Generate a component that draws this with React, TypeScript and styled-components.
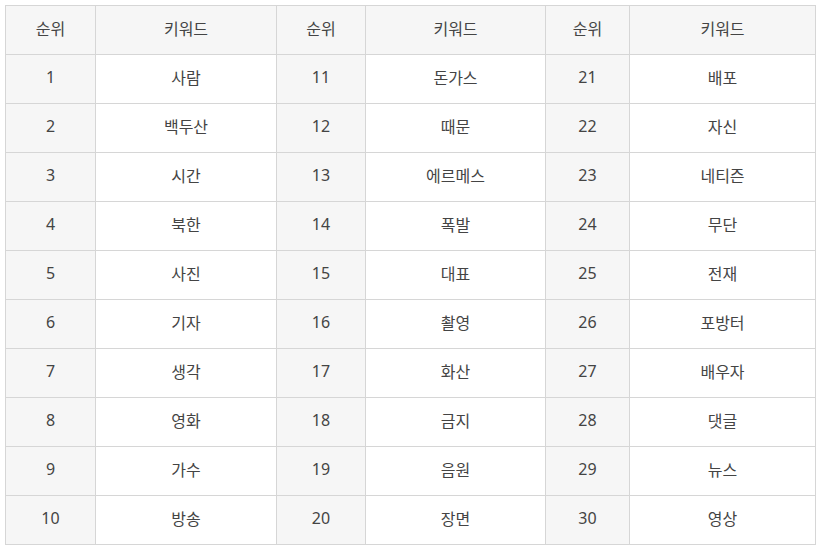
import React from "react";
import styled, { createGlobalStyle } from "styled-components";

const GlobalStyle = createGlobalStyle`
  html, body {
    margin: 0;
    padding: 0;
    background: #ffffff;
  }
`;

const Wrapper = styled.div`
  padding: 5px;
  font-family: "Noto Sans", "Noto Sans CJK KR", sans-serif;
`;

const Table = styled.table`
  width: 810px;
  border-collapse: collapse;
  table-layout: fixed;
  font-size: 16px;
  color: #444;
`;

const Head = styled.th`
  height: 44px;
  padding: 0 0 4px;
  border: 1px solid #d6d6d6;
  background-color: #f6f6f6;
  font-weight: 400;
  text-align: center;
  color: #444;
`;

const Cell = styled.td<{ $rank?: boolean }>`
  height: 44px;
  padding: 0 0 4px;
  border: 1px solid #d6d6d6;
  background-color: ${(p) => (p.$rank ? "#f6f6f6" : "#ffffff")};
  text-align: center;
  color: #444;
`;

const keywords = [
  "사람", "백두산", "시간", "북한", "사진", "기자", "생각", "영화", "가수", "방송",
  "돈가스", "때문", "에르메스", "폭발", "대표", "촬영", "화산", "금지", "음원", "장면",
  "배포", "자신", "네티즌", "무단", "전재", "포방터", "배우자", "댓글", "뉴스", "영상",
];

const widths = [90, 181, 89, 180, 84, 186];

const App: React.FC = () => {
  const rows = Array.from({ length: 10 }, (_, i) => i);
  return (
    <Wrapper>
      <GlobalStyle />
      <Table>
        <colgroup>
          {widths.map((w, i) => (
            <col key={i} style={{ width: w }} />
          ))}
        </colgroup>
        <thead>
          <tr>
            {[0, 1, 2].map((g) => (
              <React.Fragment key={g}>
                <Head>순위</Head>
                <Head>키워드</Head>
              </React.Fragment>
            ))}
          </tr>
        </thead>
        <tbody>
          {rows.map((r) => (
            <tr key={r}>
              {[0, 1, 2].map((g) => (
                <React.Fragment key={g}>
                  <Cell $rank>{g * 10 + r + 1}</Cell>
                  <Cell>{keywords[g * 10 + r]}</Cell>
                </React.Fragment>
              ))}
            </tr>
          ))}
        </tbody>
      </Table>
    </Wrapper>
  );
};

export default App;
